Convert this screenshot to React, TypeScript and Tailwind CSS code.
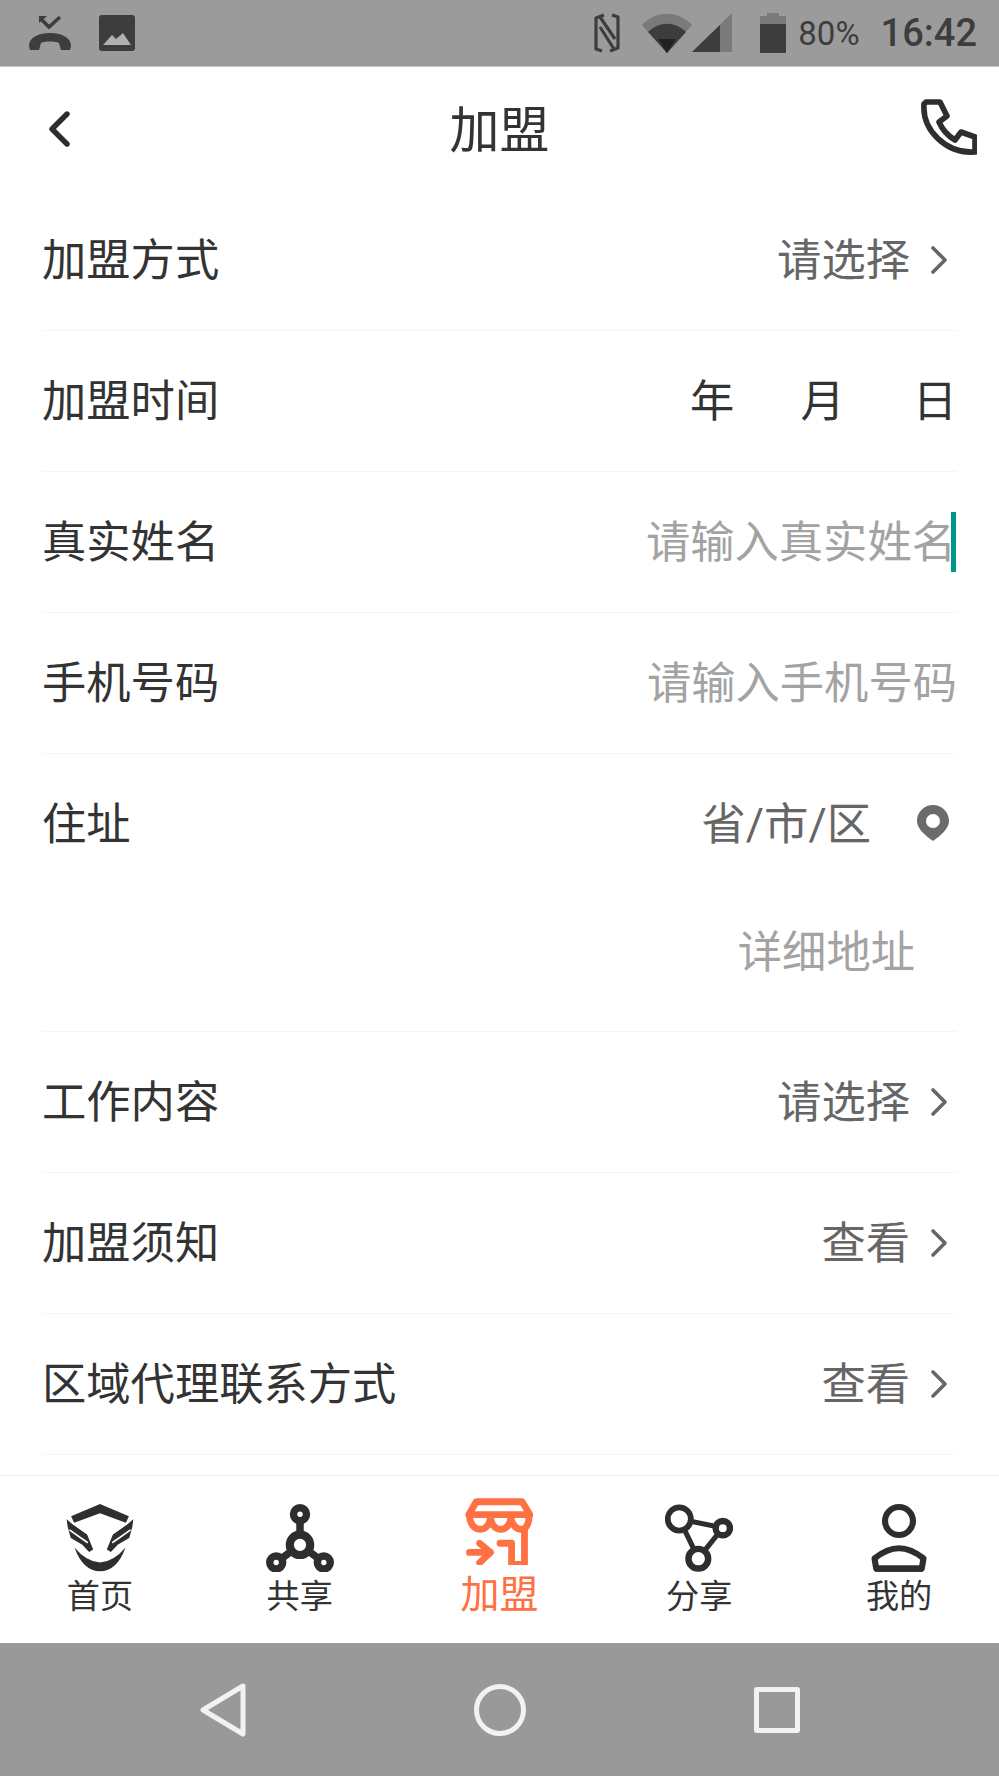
import React from "react";

const Chevron = () => (
  <svg width="18" height="30" viewBox="0 0 18 30" className="ml-[20px] mr-[8px]" fill="none">
    <path d="M3 3 L15 15 L3 27" stroke="#666" strokeWidth="3.6" strokeLinecap="round" strokeLinejoin="round" />
  </svg>
);

function Row({ label, children }: { label: string; children: React.ReactNode }) {
  return (
    <div className="h-[141px] border-b border-[#f5f5f5] flex items-center justify-between">
      <span className="text-[#333] mt-[3px] ml-[-1px]">{label}</span>
      <div className="flex items-center">{children}</div>
    </div>
  );
}

const Home = () => (
  <svg width="68" height="68" viewBox="0 0 200 200">
    <path d="M100 0 L185 36 L176 55 L100 27 L24 55 L15 36 Z" fill="#2e2e2e" />
    <path d="M2 45 L20 60 L62 90 L80 134 L68 141 L48 120 L14 100 L5 68 Z" fill="#2e2e2e" />
    <path d="M198 45 L180 60 L138 90 L120 134 L132 141 L152 120 L186 100 L195 68 Z" fill="#2e2e2e" />
    <path d="M10 76 L64 114 M190 76 L136 114" stroke="#fff" strokeWidth="5" />
    <path d="M25 128 Q60 170 100 172 Q140 170 175 128 Q150 198 100 198 Q50 198 25 128 Z" fill="#2e2e2e" />
  </svg>
);

const Hub = () => (
  <svg width="68" height="68" viewBox="0 0 200 200" fill="none">
    <path d="M100 30 V120 L30 172 M100 120 L170 172" stroke="#2e2e2e" strokeWidth="22" />
    <circle cx="100" cy="30" r="19" stroke="#2e2e2e" strokeWidth="22" fill="#fff" />
    <circle cx="30" cy="172" r="19" stroke="#2e2e2e" strokeWidth="22" fill="#fff" />
    <circle cx="170" cy="172" r="19" stroke="#2e2e2e" strokeWidth="22" fill="#fff" />
    <circle cx="100" cy="120" r="30" stroke="#2e2e2e" strokeWidth="24" fill="#fff" />
  </svg>
);

const Store = () => (
  <svg width="68" height="68" viewBox="75 50 200 200" fill="none" stroke="#ff7043" strokeWidth="20" strokeLinecap="round" strokeLinejoin="round">
    <path d="M108 64 H243 L266 102 H86 Z" />
    <path d="M88 104 C88 122 98 145 120 145 C140 145 150 125 150 106 C150 125 160 145 180 145 C200 145 210 125 210 106 C210 125 222 145 242 145 C256 145 264 125 264 104" />
    <path d="M250 148 V248 H212 V186 H178" />
    <path d="M88 213 H148 M118 186 L150 213 L118 243" />
  </svg>
);

const Nodes = () => (
  <svg width="68" height="68" viewBox="0 0 200 200" fill="none" stroke="#2e2e2e">
    <path d="M42 44 L170 70 L98 160 Z" strokeWidth="15" />
    <circle cx="42" cy="44" r="34" strokeWidth="17" fill="#fff" />
    <circle cx="170" cy="71" r="21" strokeWidth="19" fill="#fff" />
    <circle cx="98" cy="161" r="29" strokeWidth="19" fill="#fff" />
  </svg>
);

const Me = () => (
  <svg width="68" height="68" viewBox="0 0 200 200" fill="none" stroke="#2e2e2e" strokeLinejoin="round">
    <circle cx="100" cy="50" r="41" strokeWidth="18" />
    <path d="M100 130 C75 130 50 142 28 160 L33 190 H167 L172 160 C150 142 125 130 100 130 Z" strokeWidth="18" />
    <path d="M30 190 H170" strokeWidth="18" />
  </svg>
);

function Tab({ label, icon, active }: { label: string; icon: React.ReactNode; active?: boolean }) {
  return (
    <div className={active ? "flex-1 flex flex-col items-center pt-[21px]" : "flex-1 flex flex-col items-center pt-[28px]"}>
      {icon}
      <span
        className={
          active
            ? "mt-[8px] text-[39px] leading-[44px] text-[#ff7043]"
            : "mt-[5px] text-[33.2px] leading-[40px] text-[#333]"
        }
      >
        {label}
      </span>
    </div>
  );
}

export default function App() {
  return (
    <div className="w-[999px] h-[1776px] bg-white flex flex-col overflow-hidden font-[Roboto,'Noto_Sans_CJK_SC',sans-serif] text-[44.3px]">
      {/* status bar */}
      <div className="h-[67px] shrink-0 bg-[#9b9b9b] border-b border-[#c4c4c4] flex items-center justify-between pl-[29px] pr-[22px] text-[#3d3d3d]">
        <div className="flex items-center gap-[28px]">
          <svg width="42" height="36" viewBox="0 0 42 36">
            <path d="M12 4 L20 12 L31 2" fill="none" stroke="#3d3d3d" strokeWidth="3.6" />
            <path d="M10 1 H18 L10 8 Z" fill="#3d3d3d" />
            <path d="M0 31 C0 22 10 18 21 18 C32 18 42 22 42 31 L41 35 H32 L30 28 C27 26 15 26 12 28 L10 35 H1 Z" fill="#3d3d3d" />
          </svg>
          <svg width="36" height="36" viewBox="0 0 36 36">
            <rect width="36" height="36" rx="3" fill="#3d3d3d" />
            <path d="M4 30 L13 20 L17 24 L24 18 L32 30 Z" fill="#b0b0b0" />
          </svg>
        </div>
        <div className="flex items-center">
          <svg width="26" height="40" viewBox="0 0 26 40" fill="none" stroke="#3d3d3d" strokeWidth="3.2" strokeLinejoin="round">
            <path d="M10 2 L2 5 V36 L8 38" />
            <path d="M16 38 L24 35 V4 L18 2" />
            <path d="M6 4 L21 26 M20 36 L6 14" />
          </svg>
          <svg className="ml-[22px]" width="50" height="40" viewBox="0 0 50 40">
            <path d="M0 12 C14 -3 36 -3 50 12 L25 40 Z" fill="#7a7a7a" />
            <path d="M6 19 C17 8 33 8 44 19 L25 40 Z" fill="#3d3d3d" />
            <path d="M16 26 H34 L25 40 Z" fill="#222" />
          </svg>
          <svg width="40" height="40" viewBox="0 0 40 40">
            <path d="M0 39 L40 0 V39 Z" fill="#7a7a7a" />
            <path d="M0 39 L28 12 V39 Z" fill="#3d3d3d" />
          </svg>
          <svg className="ml-[28px]" width="26" height="40" viewBox="0 0 26 40">
            <path d="M7 0 H19 V3 H26 V11 H0 V3 H7 Z" fill="#7a7a7a" />
            <rect y="11" width="26" height="29" fill="#3d3d3d" />
          </svg>
          <span className="ml-[12px] text-[33px] leading-none">80%</span>
          <span className="ml-[21px] text-[38px] leading-none font-medium">16:42</span>
        </div>
      </div>

      {/* header */}
      <div className="h-[123px] shrink-0 grid grid-cols-[1fr_auto_1fr] items-center pl-[48px] pr-[22px]">
        <svg width="22" height="36" viewBox="0 0 22 36" fill="none">
          <path d="M19 3 L4 18 L19 33" stroke="#2e2e2e" strokeWidth="5.4" strokeLinecap="round" strokeLinejoin="round" />
        </svg>
        <span className="text-[50px] text-[#333] leading-none mt-[4px] ml-[-26px]">加盟</span>
        <svg width="56" height="58" viewBox="0 0 56 58" fill="none" className="justify-self-end mt-[-2px]">
          <path
            d="M5 3 H19 L26 17 L18 23 C22 32 27 37 34 41 L40 33 L54 38 V53 C26 55 1 32 3 5 Z"
            stroke="#2e2e2e"
            strokeWidth="5.6"
            strokeLinejoin="round"
          />
        </svg>
      </div>

      {/* form */}
      <div className="flex-1 overflow-hidden px-[43px]">
        <Row label="加盟方式">
          <span className="text-[#666] mt-[3px]">请选择</span>
          <Chevron />
        </Row>
        <Row label="加盟时间">
          <div className="flex items-center text-[#333] mt-[3px] mr-[-1px]">
            <span>年</span>
            <span className="ml-[66px]">月</span>
            <span className="ml-[68px]">日</span>
          </div>
        </Row>
        <Row label="真实姓名">
          <span className="text-[#a3a3a3] mt-[3px] mr-[-1px]">请输入真实姓名</span>
          <span className="w-[5px] h-[60px] bg-[#009688] ml-[-4px]" />
        </Row>
        <Row label="手机号码">
          <span className="text-[#a3a3a3] mt-[3px] mr-[-1px]">请输入手机号码</span>
        </Row>
        <div className="h-[278px] border-b border-[#f5f5f5] flex flex-col">
          <div className="h-[141px] shrink-0 flex items-center justify-between">
            <span className="text-[#333] mt-[2px] ml-[-1px]">住址</span>
            <div className="flex items-center">
              <span className="text-[#666] mt-[2px]">省/市/区</span>
              <svg width="32" height="36" viewBox="0 0 32 36" className="ml-[46px] mr-[7px] mt-[-3px]">
                <path
                  fillRule="evenodd"
                  d="M16 0 C25 0 32 7 32 16 C32 24 23 31 16 36 C9 31 0 24 0 16 C0 7 7 0 16 0 Z M16 9 A7 7 0 1 0 16 23 A7 7 0 1 0 16 9 Z"
                  fill="#6b6b6b"
                />
              </svg>
            </div>
          </div>
          <div className="h-[116px] flex items-center justify-end pr-[41px]">
            <span className="text-[#a3a3a3]">详细地址</span>
          </div>
        </div>
        <Row label="工作内容">
          <span className="text-[#666] mt-[3px]">请选择</span>
          <Chevron />
        </Row>
        <Row label="加盟须知">
          <span className="text-[#666] mt-[3px]">查看</span>
          <Chevron />
        </Row>
        <Row label="区域代理联系方式">
          <span className="text-[#666] mt-[3px]">查看</span>
          <Chevron />
        </Row>
      </div>

      {/* tabs */}
      <div className="h-[168px] shrink-0 bg-white border-t border-[#eeeeee] flex">
        <Tab label="首页" icon={<Home />} />
        <Tab label="共享" icon={<Hub />} />
        <Tab label="加盟" icon={<Store />} active />
        <Tab label="分享" icon={<Nodes />} />
        <Tab label="我的" icon={<Me />} />
      </div>

      {/* android nav */}
      <div className="h-[133px] shrink-0 bg-[#999999] flex items-center justify-between pl-[200px] pr-[199px]">
        <svg width="46" height="54" viewBox="0 0 46 54" fill="none">
          <path d="M43 3 L3 27 L43 51 Z" stroke="#f2f2f2" strokeWidth="5" strokeLinejoin="round" />
        </svg>
        <svg width="52" height="52" viewBox="0 0 52 52" fill="none">
          <circle cx="26" cy="26" r="23.5" stroke="#f2f2f2" strokeWidth="5" />
        </svg>
        <div className="w-[46px] h-[46px] border-[5px] border-[#f2f2f2] rounded-[3px]" />
      </div>
    </div>
  );
}
